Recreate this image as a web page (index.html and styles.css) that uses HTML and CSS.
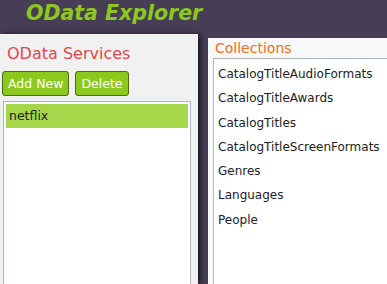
FILE: index.html
```html
<!DOCTYPE html>
<html lang="en">
<head>
    <meta charset="UTF-8">
    <title>OData Explorer</title>
    <link rel="stylesheet" href="styles.css">
</head>
<body>

<div class="header">
    <h1>OData Explorer</h1>
</div>

<div class="main">
    <!-- Services panel -->
    <div class="panel services">
        <div class="panel-title">OData Services</div>
        <div class="toolbar">
            <button type="button">Add New</button>
            <button type="button">Delete</button>
        </div>
        <ul class="list">
            <li class="selected">netflix</li>
        </ul>
    </div>

    <!-- Collections panel -->
    <div class="panel collections">
        <div class="panel-title">Collections</div>
        <ul class="list">
            <li>CatalogTitleAudioFormats</li>
            <li>CatalogTitleAwards</li>
            <li>CatalogTitles</li>
            <li>CatalogTitleScreenFormats</li>
            <li>Genres</li>
            <li>Languages</li>
            <li>People</li>
        </ul>
    </div>
</div>

</body>
</html>
```

FILE: styles.css
```css
html, body {
    height: 100%;
}

body {
    margin: 0;
    background: #473e55;
    font-family: 'DejaVu Sans', Verdana, sans-serif;
    color: #222;
    display: flex;
    flex-direction: column;
    overflow: hidden;
}

.header {
    height: 34px;
    flex: none;
}

.header h1 {
    margin: 0;
    padding: 1px 0 0 26px;
    font-size: 20.5px;
    font-style: italic;
    font-weight: bold;
    color: #8cc81e;
    line-height: 24px;
}

.main {
    flex: 1;
    display: flex;
    gap: 10px;
    min-height: 0;
}

.panel {
    display: flex;
    flex-direction: column;
}

.services {
    width: 198px;
    background: #f1f1f1;
    box-shadow: 3px 0 5px rgba(0, 0, 0, 0.6);
    padding: 0 7px 0 3px;
    box-sizing: border-box;
}

.collections {
    flex: 1;
    margin-top: 4px;
    background: #f8f8f8;
    padding: 0 0 0 5px;
}

.panel-title {
    font-size: 16px;
    color: #e0474c;
    padding: 10px 0 0 4px;
    height: 37px;
    box-sizing: border-box;
}

.collections .panel-title {
    font-size: 14px;
    color: #f26b22;
    padding: 2px 0 0 2px;
    height: 20px;
}

.toolbar {
    display: flex;
    gap: 6px;
    margin-left: -1px;
    height: 30px;
    align-items: flex-start;
}

button {
    height: 25px;
    padding: 0 5px;
    background: #8dc81d;
    color: #fff;
    border: 1px solid #4e6b14;
    border-radius: 3px;
    font-family: inherit;
    font-size: 12.5px;
}

.list {
    flex: 1;
    margin: 0;
    padding: 2px;
    list-style: none;
    background: #fff;
    border: 1px solid #a9b6c4;
    border-bottom: none;
}

.services .list li {
    height: 24px;
    line-height: 24px;
    padding-left: 3px;
    font-size: 12.5px;
}

.selected {
    background: #a6d74a;
}

.collections .list {
    padding: 3px 0 0 4px;
    border-right: none;
}

.collections .list li {
    height: 24.3px;
    line-height: 24px;
    font-size: 12px;
}
```
